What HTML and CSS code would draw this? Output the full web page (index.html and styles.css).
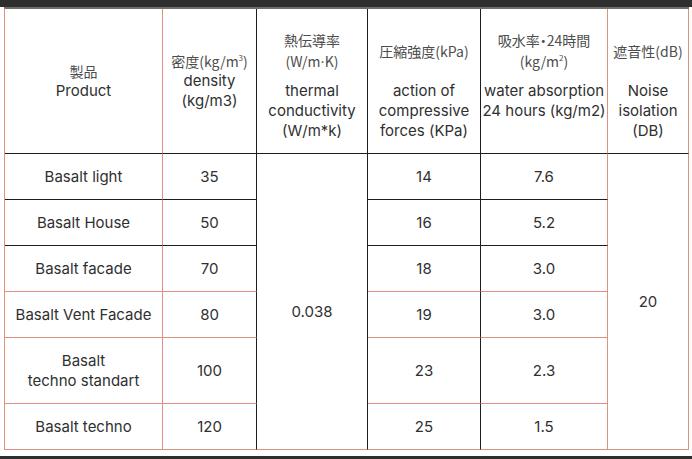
FILE: index.html
```html
<!DOCTYPE html>
<html lang="ja">
<head>
<meta charset="utf-8">
<title>Basalt products</title>
<link rel="stylesheet" href="styles.css">
</head>
<body>
<div class="topbar"></div>
<div class="wrap">
  <div class="grid" role="table">
    <div class="cell head c1 bd" role="columnheader">
      <div class="jp">製品</div>
      <div class="en">Product</div>
    </div>
    <div class="cell head c2 bdark" role="columnheader">
      <div class="jp">密度(kg/m<span class="sup">3</span>)</div>
      <div class="en">density<br>(kg/m3)</div>
    </div>
    <div class="cell split c3 bdark" role="columnheader">
      <div class="jpbox"><div class="jp">熱伝導率<br>(W/m<span class="dot">·</span>K)</div></div>
      <div class="en">thermal<br>conductivity<br>(W/m*k)</div>
    </div>
    <div class="cell split c4 bdark" role="columnheader">
      <div class="jpbox"><div class="jp">圧縮強度(kPa)</div></div>
      <div class="en">action of<br>compressive<br>forces (KPa)</div>
    </div>
    <div class="cell split c5 bdark" role="columnheader">
      <div class="jpbox"><div class="jp">吸水率・24時間<br>(kg/m<span class="sup">2</span>)</div></div>
      <div class="en">water absorption<br>24 hours (kg/m2)</div>
    </div>
    <div class="cell split c6 bdark" role="columnheader">
      <div class="jpbox"><div class="jp">遮音性(dB)</div></div>
      <div class="en">Noise<br>isolation<br>(DB)</div>
    </div>

    <div class="cell c1 bdark">Basalt light</div>
    <div class="cell c2 bdark">35</div>
    <div class="cell c3 merged bsalmon">0.038</div>
    <div class="cell c4 bdark">14</div>
    <div class="cell c5 bdark">7.6</div>
    <div class="cell c6 merged20 bsalmon">20</div>

    <div class="cell c1 bdark">Basalt House</div>
    <div class="cell c2 bdark">50</div>
    <div class="cell c4 bdark">16</div>
    <div class="cell c5 bdark">5.2</div>

    <div class="cell c1 bsalmon">Basalt facade</div>
    <div class="cell c2 bsalmon">70</div>
    <div class="cell c4 bsalmon">18</div>
    <div class="cell c5 bsalmon">3.0</div>

    <div class="cell c1 bsalmon">Basalt Vent Facade</div>
    <div class="cell c2 bsalmon">80</div>
    <div class="cell c4 bsalmon">19</div>
    <div class="cell c5 bsalmon">3.0</div>

    <div class="cell c1 bsalmon">Basalt<br>techno standart</div>
    <div class="cell c2 bsalmon">100</div>
    <div class="cell c4 bsalmon">23</div>
    <div class="cell c5 bsalmon">2.3</div>

    <div class="cell c1 bsalmon">Basalt techno</div>
    <div class="cell c2 bsalmon">120</div>
    <div class="cell c4 bsalmon">25</div>
    <div class="cell c5 bsalmon">1.5</div>
  </div>
</div>
<div class="bottombar"></div>
</body>
</html>
```
FILE: styles.css
```css
html, body {
  margin: 0;
  padding: 0;
  background: #ffffff;
}
body {
  font-family: "Inter", "Noto Sans CJK JP", sans-serif;
  color: #303030;
  font-size: 15px;
}
.topbar {
  height: 7px;
  background: #2e2e2e;
}
.wrap {
  padding-left: 4px;
  padding-bottom: 6px;
}
.grid {
  display: grid;
  width: 685px;
  box-sizing: border-box;
  grid-template-columns: 158px 94px 111px 113px 127px 81px;
  grid-template-rows: 145px 46px 46px 46px 46px 66px 46px;
  border-top: 2px solid #6e6e6e;
  border-left: 1px solid #e0907f;
}
.cell {
  box-sizing: border-box;
  display: flex;
  flex-direction: column;
  align-items: center;
  justify-content: center;
  text-align: center;
  line-height: 20px;
  border-right: 1px solid #1e1e1e;
  border-bottom: 1px solid #1e1e1e;
}
.c1, .c5, .c6 {
  border-right-color: #e0907f;
}
.bdark {
  border-bottom-color: #1e1e1e;
}
.bsalmon {
  border-bottom-color: #e0907f;
}
.c1 { grid-column: 1; }
.c2 { grid-column: 2; }
.c3 { grid-column: 3; }
.c4 { grid-column: 4; }
.c5 { grid-column: 5; }
.c6 { grid-column: 6; }
.merged {
  grid-row: 2 / span 6;
  padding-top: 20px;
}
.merged20 {
  grid-row: 2 / span 6;
}
.head .jp {
  line-height: 19px;
}
.jp {
  font-family: "Noto Sans CJK JP", sans-serif;
  font-feature-settings: "palt";
  color: #4d4d4d;
  font-size: 14px;
  line-height: 21px;
}
.dot {
  font-family: "Inter", sans-serif;
}
.sup {
  font-size: 8px;
  line-height: 0;
  vertical-align: 6px;
}
.split {
  display: grid;
  grid-template-rows: 44px auto;
  row-gap: 8px;
  align-content: start;
  justify-items: center;
  padding-top: 20px;
}
.jpbox {
  display: flex;
  align-items: center;
  justify-content: center;
}
.en {
  line-height: 20px;
}
.bottombar {
  height: 10px;
  background: #2e2e2e;
}
```
